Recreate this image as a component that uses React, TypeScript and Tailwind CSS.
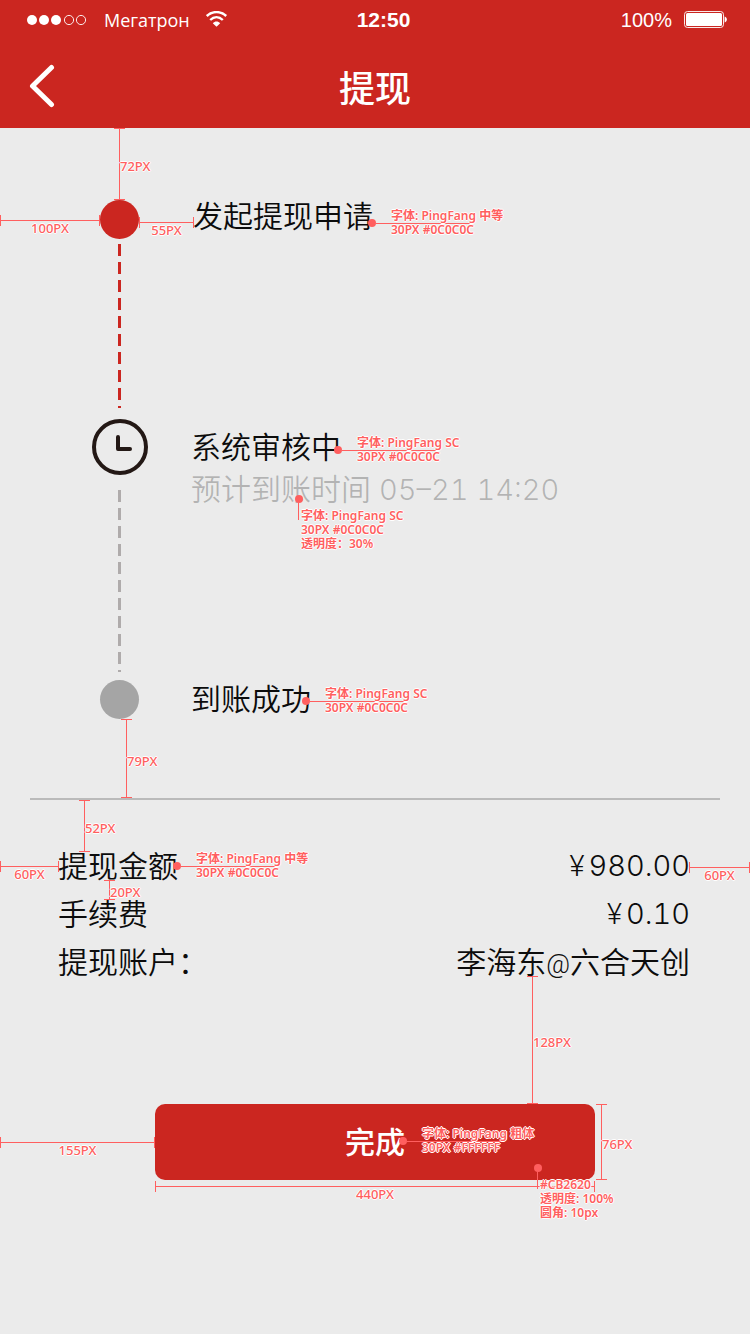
import type { ReactNode } from "react";

const labelFace =
  "whitespace-nowrap font-['Noto_Sans','Noto_Sans_CJK_SC',sans-serif] text-[#ff5f5f] [text-shadow:1px_0_#fff,-1px_0_#fff,0_1px_#fff,0_-1px_#fff]";
const measureText = `${labelFace} text-[13px] leading-[14px] font-medium`;
const noteText = `${labelFace} text-[12px] leading-[14px] font-semibold`;

/** Horizontal measure with end ticks and a label below. */
function Across({ className, label }: { className: string; label: string }) {
  return (
    <div className={`pointer-events-none absolute h-[11px] border-x border-[#ff5f5f] ${className}`}>
      <div className="mt-[5px] h-px bg-[#ff5f5f]" />
      <div className={`flex justify-center ${measureText}`}>{label}</div>
    </div>
  );
}

/** Vertical measure with end ticks and a label on the right. */
function Down({ className, label }: { className: string; label: string }) {
  return (
    <div className={`pointer-events-none absolute flex w-[11px] items-center border-y border-[#ff5f5f] ${className}`}>
      <div className="ml-[5px] w-px shrink-0 self-stretch bg-[#ff5f5f]" />
      <div className={`pt-1 ${measureText}`}>{label}</div>
    </div>
  );
}

/** Dot with a leader line running right, behind a two-line label. */
function Note({ className, lines }: { className: string; lines: string[] }) {
  return (
    <div className={`pointer-events-none absolute flex h-7 w-[104px] items-center text-left ${className}`}>
      <div className="size-2 shrink-0 rounded-full bg-[#ff5f5f]" />
      <div className="h-px grow bg-[#ff5f5f]" />
      <div className={`absolute left-[23px] ${noteText}`}>
        {lines.map((line) => (
          <div key={line}>{line}</div>
        ))}
      </div>
    </div>
  );
}

/** Dot with a short leader line running down to a label. */
function DropNote({ className, lines }: { className: string; lines: string[] }) {
  return (
    <div className={`pointer-events-none absolute w-2 text-left ${className}`}>
      <div className="size-2 rounded-full bg-[#ff5f5f]" />
      <div className="ml-[3px] h-[17px] w-px bg-[#ff5f5f]" />
      <div className={`absolute top-[14px] left-[6px] ${noteText}`}>
        {lines.map((line) => (
          <div key={line}>{line}</div>
        ))}
      </div>
    </div>
  );
}

function StatusBar() {
  return (
    <div className="grid h-10 grid-cols-3 items-center pr-[23px] pl-6">
      <div className="flex items-center gap-4">
        <svg className="h-3 w-[64px]" viewBox="0 0 64 12" aria-hidden="true">
          <circle cx="8" cy="6" r="5" fill="#fff" />
          <circle cx="20" cy="6" r="5" fill="#fff" />
          <circle cx="32" cy="6" r="5" fill="#fff" />
          <circle cx="45" cy="6" r="4.6" fill="none" stroke="#fff" strokeWidth="0.9" />
          <circle cx="57" cy="6" r="4.6" fill="none" stroke="#fff" strokeWidth="0.9" />
        </svg>
        <span className="font-['Open_Sans','Noto_Sans',sans-serif] text-[18px] leading-6">Мегатрон</span>
        <svg className="-mt-0.5 h-4 w-[22px]" viewBox="0 0 22 16" fill="none" stroke="#fff" aria-hidden="true">
          <path d="M.8 5C6.4-.2 14.6-.2 20.2 5" strokeWidth="2.5" />
          <path d="M4.2 9C8 5.4 13 5.4 16.8 9" strokeWidth="2.4" />
          <path d="M10.5 15.8 6.8 12.2C9 10 12 10 14.2 12.2Z" fill="#fff" stroke="none" />
        </svg>
      </div>
      <span className="pl-4 text-center font-['Liberation_Sans',sans-serif] text-[21px] leading-6 font-bold">
        12:50
      </span>
      <div className="flex items-center justify-end gap-3">
        <span className="font-['Liberation_Sans',sans-serif] text-[20px] leading-6">100%</span>
        <svg className="h-[18px] w-[43px]" viewBox="0 0 43 18" aria-hidden="true">
          <rect x="0.5" y="0.5" width="39" height="16" rx="3" fill="none" stroke="#fff" strokeWidth="0.9" />
          <rect x="2" y="2" width="36" height="13" rx="1.5" fill="#fff" />
          <path d="M40.6 5.6C43.6 6.6 43.6 10.6 40.6 11.6Z" fill="#fff" />
        </svg>
      </div>
    </div>
  );
}

function ClockIcon() {
  return (
    <svg className="size-14" viewBox="0 0 56 56" fill="none" stroke="#231815" strokeWidth="4" aria-hidden="true">
      <circle cx="28" cy="28" r="26" />
      <path d="M26 18v12h12" strokeLinecap="round" strokeLinejoin="round" />
    </svg>
  );
}

function Step({ marker, line, children }: { marker: ReactNode; line?: ReactNode; children: ReactNode }) {
  return (
    <li className="relative flex gap-[43px] px-[92px]">
      <div className="flex w-14 shrink-0 flex-col items-start">
        {marker}
        {line}
      </div>
      {children}
    </li>
  );
}

function Amount({ value }: { value: string }) {
  return (
    <dd className="flex gap-1 text-[29px]">
      <span className="font-['Roboto',sans-serif]">¥</span>
      <span>{value}</span>
    </dd>
  );
}

export default function App() {
  return (
    <div className="min-h-screen bg-[#ebebeb] font-['Inter','Noto_Sans_CJK_SC',sans-serif] text-[30px] font-[350] text-[#0c0c0c] tabular-nums">
      <header className="bg-[#cb2620] font-normal text-white">
        <StatusBar />
        <div className="grid h-[88px] grid-cols-[1fr_auto_1fr] items-center px-7 pt-1">
          <button type="button" aria-label="返回" className="w-8">
            <svg className="h-11 w-7" viewBox="0 0 28 44" fill="none" stroke="#fff" strokeWidth="5" aria-hidden="true">
              <path d="M23.5 3.5 4.5 22l19 18.5" strokeLinecap="round" strokeLinejoin="round" />
            </svg>
          </button>
          <h1 className="pt-1.5 text-[36px] leading-[48px] font-medium">提现</h1>
        </div>
      </header>

      <main>
        <ol className="relative pt-[72px] pb-[79px]">
          <Step
            marker={<span className="ml-2 size-[39px] rounded-full bg-[#cb2620]" />}
            line={
              <span className="mt-[5px] mb-[11px] ml-[26px] h-[164px] w-[3px] bg-[repeating-linear-gradient(to_bottom,#cb2620_0_12px,transparent_12px_18px)]" />
            }
          >
            <p className="pl-0.5 leading-8">发起提现申请</p>
            <Down className="bottom-full left-[114px] h-[72px]" label="72PX" />
            <Across className="top-[15px] left-0 w-[100px]" label="100PX" />
            <Across className="top-[17px] left-[139px] w-[55px]" label="55PX" />
            <Note className="top-[9px] left-[368px]" lines={["字体: PingFang 中等", "30PX #0C0C0C"]} />
          </Step>
          <Step
            marker={<ClockIcon />}
            line={
              <span className="mt-[15px] mb-2 ml-[26px] h-[182px] w-[3px] bg-[repeating-linear-gradient(to_bottom,#afabab_0_12px,transparent_12px_18px)]" />
            }
          >
            <div className="pt-[7px] leading-[42px]">
              <p>系统审核中</p>
              <p className="text-[#0c0c0c]/25">
                预计到账时间 <time className="text-[29px] leading-8">05–21 14:20</time>
              </p>
            </div>
            <Note className="top-[17px] left-[334px]" lines={["字体: PingFang SC", "30PX #0C0C0C"]} />
            <DropNote
              className="top-[76px] left-[295px]"
              lines={["字体: PingFang SC", "30PX #0C0C0C", "透明度：30%"]}
            />
          </Step>
          <Step marker={<span className="ml-2 size-[39px] rounded-full bg-[#a5a5a5]" />}>
            <p className="leading-[38px]">到账成功</p>
            <Note className="top-[7px] left-[302px]" lines={["字体: PingFang SC", "30PX #0C0C0C"]} />
            <Down className="top-[39px] left-[121px] h-[79px]" label="79PX" />
          </Step>
        </ol>

        <hr className="mx-[30px] border-t-2 border-[#bababa]" />

        <dl className="relative pt-[42px] pr-[60px] pl-[58px] leading-[48px]">
          <div className="flex justify-between">
            <dt>提现金额</dt>
            <Amount value="980.00" />
          </div>
          <div className="flex justify-between">
            <dt>手续费</dt>
            <Amount value="0.10" />
          </div>
          <div className="flex justify-between">
            <dt>提现账户：</dt>
            <dd>
              李海东<span className="font-['Roboto',sans-serif] text-[26px] leading-8">@</span>六合天创
            </dd>
          </div>
          <Down className="top-0 left-[79px] h-[52px]" label="52PX" />
          <Down className="top-[80px] left-[104px] h-5" label="20PX" />
          <Across className="top-[61px] left-0 w-[59px]" label="60PX" />
          <Across className="top-[62px] right-0 w-[61px]" label="60PX" />
          <Note className="top-[52px] left-[173px]" lines={["字体: PingFang 中等", "30PX #0C0C0C"]} />
        </dl>

        <div className="relative px-[155px] pt-[118px] pb-20">
          <button type="button" className="h-[76px] w-full rounded-[10px] bg-[#cb2620] font-medium text-white">
            完成
          </button>
          <Down className="top-[-10px] left-[527px] h-[128px]" label="128PX" />
          <Down className="top-[118px] right-[143px] h-[76px]" label="76PX" />
          <Across className="top-[151px] left-0 w-[155px]" label="155PX" />
          <Across className="inset-x-[155px] top-[195px]" label="440PX" />
          <Note className="top-[141px] left-[399px]" lines={["字体: PingFang 粗体", "30PX #FFFFFF"]} />
          <DropNote className="top-[178px] left-[534px]" lines={["#CB2620", "透明度: 100%", "圆角: 10px"]} />
        </div>
      </main>
    </div>
  );
}
